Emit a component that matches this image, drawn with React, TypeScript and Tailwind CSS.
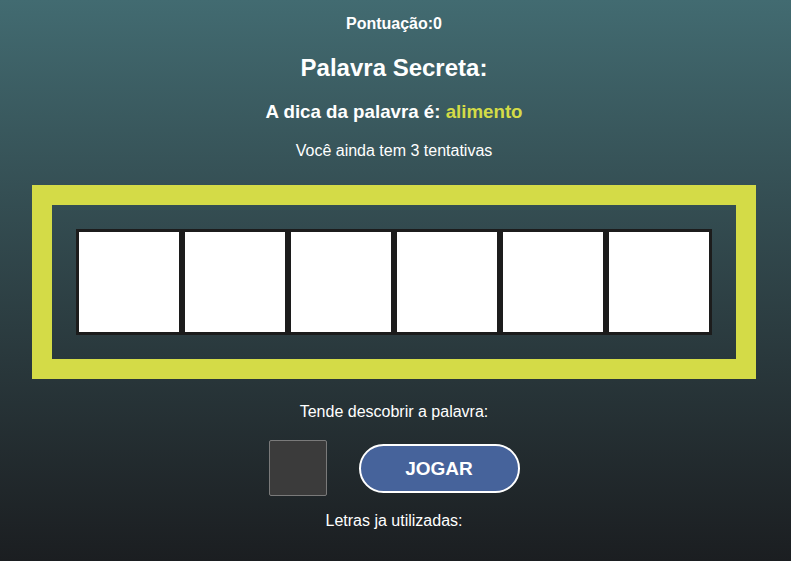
import React from "react";

export default function App() {
  const slots = [0, 1, 2, 3, 4, 5];
  return (
    <div
      className="w-[791px] h-[561px] overflow-hidden bg-gradient-to-b from-[#426b71] to-[#1b1e21] text-white pr-[3px]"
      style={{ fontFamily: '"Liberation Sans", Arial, sans-serif' }}
    >
      <div className="flex flex-col items-center pt-[15px]">
        <div className="text-[16px] leading-[18px] font-bold">Pontuação:0</div>
        <div className="mt-[21px] text-[24px] leading-[28px] font-bold">Palavra Secreta:</div>
        <div className="mt-[19px] text-[18.72px] leading-[22px] font-bold">
          A dica da palavra é: <span className="text-[#d4db47]">alimento</span>
        </div>
        <div className="mt-[19px] text-[16px] leading-[18px]">Você ainda tem 3 tentativas</div>

        <div className="mt-[25px] border-[20px] border-[#d4db47] p-[24px] flex">
          {slots.map((i) => (
            <div
              key={i}
              className="w-[106px] h-[106px] border-[3px] border-[#1c1c1c] bg-white"
            />
          ))}
        </div>

        <div className="mt-[24px] text-[16px] leading-[18px]">Tende descobrir a palavra:</div>

        <div className="mt-[19px] flex items-center gap-[32px]">
          <input
            type="text"
            maxLength={1}
            className="w-[58px] h-[56px] bg-[#3b3b3b] border border-[#7a7a7a] rounded-[2px] outline-none text-white text-center"
          />
          <button className="w-[161px] h-[49px] rounded-full bg-[#46639b] border-2 border-white text-white font-bold text-[19px] leading-none">
            JOGAR
          </button>
        </div>

        <div className="mt-[16px] text-[16px] leading-[18px]">Letras ja utilizadas:</div>
      </div>
    </div>
  );
}
